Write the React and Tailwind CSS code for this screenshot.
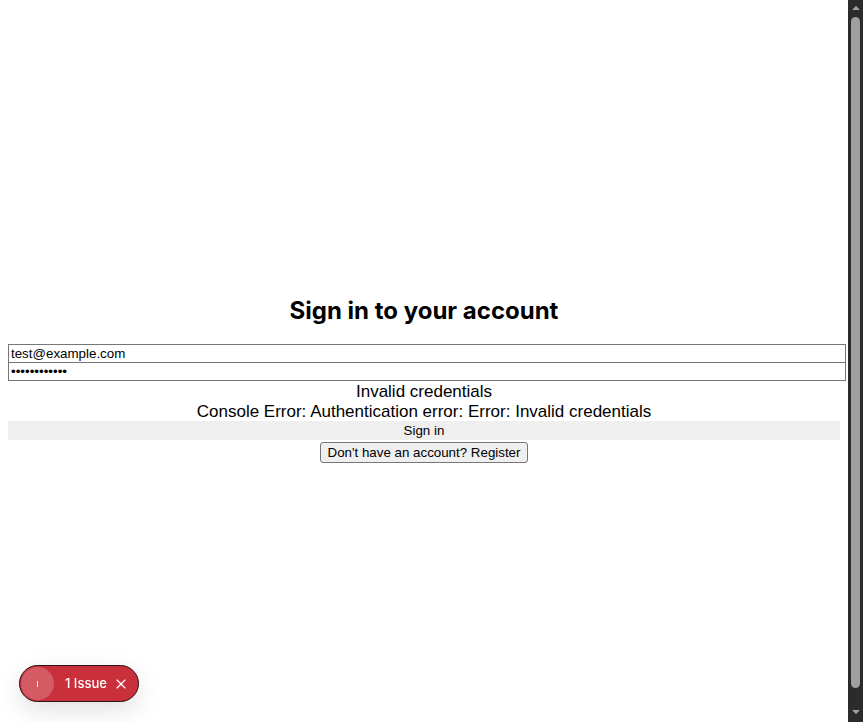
import { X } from "lucide-react";

function Scrollbar() {
    return (
        <div className="flex h-screen w-[15px] shrink-0 flex-col items-center bg-[#2b2b2b]">
            <div className="mt-[6px] h-0 w-0 border-x-[4px] border-b-[4px] border-x-transparent border-b-[#a3a3a3]"></div>
            <div className="mt-[7px] h-[671px] w-[9px] rounded-full bg-[#9f9f9f]"></div>
            <div className="mt-[22px] h-0 w-0 border-x-[4px] border-t-[4px] border-x-transparent border-t-[#a3a3a3]"></div>
        </div>
    );
}

export default function App() {
    return (
        <div className="flex h-screen overflow-hidden">
            <div className="h-screen flex-1 bg-white px-2 pt-[295px] text-black font-['Liberation_Sans',Arial,sans-serif]">
                <h2 className="text-center text-2xl leading-8 font-bold font-['Inter',sans-serif]">
                    Sign in to your account
                </h2>
                <form className="mt-[17px]">
                    <div>
                        <input
                            type="email"
                            defaultValue="test@example.com"
                            className="box-content block w-full h-[15px] border border-[#767676] px-[2px] py-px text-[13.33px] leading-[15px] outline-none"
                        />
                        <input
                            type="password"
                            defaultValue="password1234"
                            className="box-content -mt-px block w-full h-[15px] border border-[#767676] px-[2px] py-px text-[13.33px] leading-[15px] outline-none"
                        />
                    </div>
                    <div className="pt-px text-center text-[17px] leading-5">Invalid credentials</div>
                    <div className="-mb-px text-center text-[17px] leading-5">
                        Console Error: Authentication error: Error: Invalid credentials
                    </div>
                    <button
                        type="button"
                        className="block w-full h-[19px] bg-[#efefef] text-[13.33px] leading-[19px] text-center"
                    >
                        Sign in
                    </button>
                    <div className="text-center">
                        <button
                            type="button"
                            className="mt-px h-[21px] rounded-[3px] border border-[#767676] bg-[#efefef] px-[7px] text-[13.33px] leading-[19px]"
                        >
                            Don't have an account? Register
                        </button>
                    </div>
                </form>
            </div>
            <Scrollbar />
            <div className="fixed left-[19px] top-[665px] flex h-[37px] w-[120px] items-center rounded-full border border-[#2a1416] bg-[#c9303c] shadow-[0_8px_24px_rgba(0,0,0,0.12)] font-['Inter',sans-serif]">
                <div className="ml-px flex h-[33px] w-[33px] items-center justify-center rounded-full bg-[#d45a63]">
                    <div className="h-[6px] w-[1.5px] bg-white/80"></div>
                </div>
                <span className="ml-[11px] text-[13px] font-medium text-white">1 Issue</span>
                <X className="ml-[6px] text-white" size={16} strokeWidth={1.75} />
            </div>
        </div>
    );
}
